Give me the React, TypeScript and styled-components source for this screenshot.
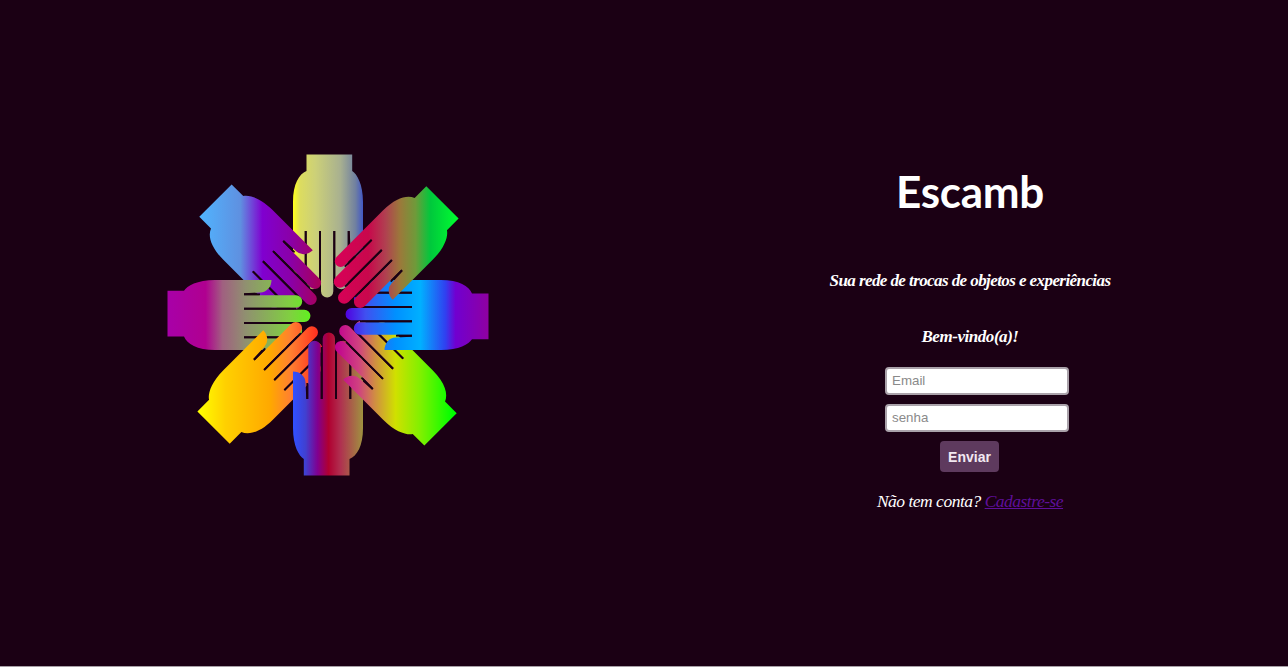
import React from "react";
import styled, { createGlobalStyle } from "styled-components";

const GlobalStyle = createGlobalStyle`
  html, body {
    margin: 0;
    padding: 0;
    height: 667px;
    overflow: hidden;
    background: #a79fa6;
  }
`;

// one hand, pointing down from the top, origin at the middle of the flower
const HAND_PATH =
  "M-21.5,-160.5 H24.2 V-144 C29,-141 35,-131 35,-113 V-56.5 A12.5,11 0 0 1 22.5,-67.5 L21.7,-84 H19.7 V-32 " +
  "A6.2,6.2 0 0 1 7.3,-32 V-84 H5.3 V-23.7 A6.15,6.15 0 0 1 -7,-23.7 V-84 H-9 V-32 A6.15,6.15 0 0 1 -21.3,-32 " +
  "V-84 H-23.3 V-47 A5.85,5.85 0 0 1 -35,-47 V-113 C-35,-131 -29,-141 -21.5,-144 Z";

const SLITS: [number, number][] = [
  [-22.3, -46],
  [-8, -32],
  [6.3, -32],
  [20.7, -68],
];

const hands: { angle: number; stops: [number, string][] }[] = [
  { angle: 0, stops: [[293, "#ffff20"], [300, "#dcdc60"], [315, "#ccd078"], [340, "#a8b090"], [355, "#7080a0"], [363, "#3f55c8"]] },
  { angle: -45, stops: [[199, "#50b4ff"], [240, "#5f90e0"], [262, "#8000d0"], [290, "#8a00a8"], [320, "#a80058"]] },
  { angle: -90, stops: [[167, "#a800a8"], [205, "#b00090"], [222, "#a06080"], [245, "#909070"], [290, "#80d040"], [310, "#60f020"]] },
  { angle: -135, stops: [[198, "#ffff00"], [225, "#ffd000"], [270, "#ffa800"], [290, "#ff8030"], [317, "#ff3020"]] },
  { angle: 180, stops: [[293, "#3050ff"], [305, "#4040d0"], [317, "#800090"], [328, "#b00030"], [340, "#b03050"], [362, "#a09040"]] },
  { angle: 135, stops: [[335, "#c00090"], [358, "#d04080"], [375, "#d09040"], [395, "#d0e000"], [420, "#80f000"], [452, "#00ff00"]] },
  { angle: 90, stops: [[345, "#5000e0"], [365, "#4050f0"], [395, "#0090ff"], [420, "#00b0ff"], [445, "#3040f0"], [455, "#7000d0"], [489, "#9000a0"]] },
  { angle: 45, stops: [[335, "#d80058"], [368, "#c8084c"], [385, "#b04050"], [400, "#9a7a3a"], [415, "#6f9a3a"], [430, "#00c83c"], [458, "#00ff30"]] },
];

const LogoSvg = styled.svg`
  filter: blur(0.35px);
`;

function HandsLogo() {
  return (
    <LogoSvg width="322" height="322" viewBox="-161 -161 322 322" aria-label="Escamb">
      <defs>
        {hands.map((hand, i) => (
          <linearGradient
            key={i}
            id={`hand-${i}`}
            gradientUnits="userSpaceOnUse"
            x1="-161"
            y1="0"
            x2="161"
            y2="0"
            gradientTransform={`rotate(${-hand.angle})`}
          >
            {hand.stops.map(([x, color]) => (
              <stop key={x} offset={(x - 166.5) / 322} stopColor={color} />
            ))}
          </linearGradient>
        ))}
      </defs>
      {hands.map((hand, i) => (
        <g key={i} transform={`rotate(${hand.angle})`}>
          <path d={HAND_PATH} fill={`url(#hand-${i})`} />
          {SLITS.map(([x, end]) => (
            <line key={x} x1={x} y1="-84" x2={x} y2={end} stroke="#1b0014" strokeWidth="1.8" />
          ))}
        </g>
      ))}
    </LogoSvg>
  );
}

const Page = styled.main`
  display: flex;
  height: 666px;
  background: #1b0014;
  color: #fff;
`;

const LogoPanel = styled.section`
  flex: 0 0 655px;
  display: flex;
  align-items: center;
  justify-content: center;
  padding-bottom: 37px;
  box-sizing: border-box;
`;

const LoginPanel = styled.section`
  flex: 1;
  padding: 161px 3px 0 0;
  display: flex;
  flex-direction: column;
  align-items: center;
  box-sizing: border-box;
`;

const Title = styled.h1`
  margin: 0;
  font-family: "Lato", sans-serif;
  font-weight: 700;
  font-size: 44px;
  letter-spacing: -0.3px;
  line-height: 60px;
`;

const Tagline = styled.h2`
  margin: 40px 0 0;
  font-family: "Liberation Serif", serif;
  font-style: italic;
  font-weight: 700;
  font-size: 17px;
  letter-spacing: -0.58px;
  line-height: 40px;
`;

const Welcome = styled.h3`
  margin: 16px 0 0;
  font-family: "Liberation Serif", serif;
  font-style: italic;
  font-weight: 700;
  font-size: 17px;
  letter-spacing: -0.45px;
  line-height: 40px;
`;

const Form = styled.form`
  margin-top: 10px;
  display: flex;
  flex-direction: column;
  align-items: center;
`;

const Field = styled.input`
  box-sizing: border-box;
  width: 184px;
  height: 28px;
  margin: 0 0 9px 14px;
  padding: 0 5px 2px;
  border: 2px solid #aaa2aa;
  border-radius: 4px;
  background: #fff;
  font-family: "Liberation Sans", sans-serif;
  font-size: 13.33px;
  outline: none;

  &::placeholder {
    color: #8a8a8a;
  }
`;

const SubmitButton = styled.button`
  width: 59px;
  height: 31px;
  margin-right: 1px;
  padding: 0;
  border: none;
  border-radius: 4px;
  background: #5e3a5e;
  color: #f2e8f2;
  font-family: "Liberation Sans", sans-serif;
  font-weight: 700;
  font-size: 14px;
  cursor: pointer;
`;

const SignUp = styled.p`
  margin: 15px 0 0;
  font-family: "Liberation Serif", serif;
  font-style: italic;
  font-size: 17.5px;
  letter-spacing: -0.5px;
  line-height: 28px;
`;

const SignUpLink = styled.a`
  color: #5f0f9a;
  text-decoration: underline;
`;

export default function App() {
  return (
    <>
      <GlobalStyle />
      <Page>
        <LogoPanel>
          <HandsLogo />
        </LogoPanel>
        <LoginPanel>
          <Title>Escamb</Title>
          <Tagline>Sua rede de trocas de objetos e experiências</Tagline>
          <Welcome>Bem-vindo(a)!</Welcome>
          <Form onSubmit={(e) => e.preventDefault()}>
            <Field type="email" placeholder="Email" />
            <Field type="password" placeholder="senha" />
            <SubmitButton type="submit">Enviar</SubmitButton>
          </Form>
          <SignUp>
            Não tem conta? <SignUpLink href="#">Cadastre-se</SignUpLink>
          </SignUp>
        </LoginPanel>
      </Page>
    </>
  );
}
